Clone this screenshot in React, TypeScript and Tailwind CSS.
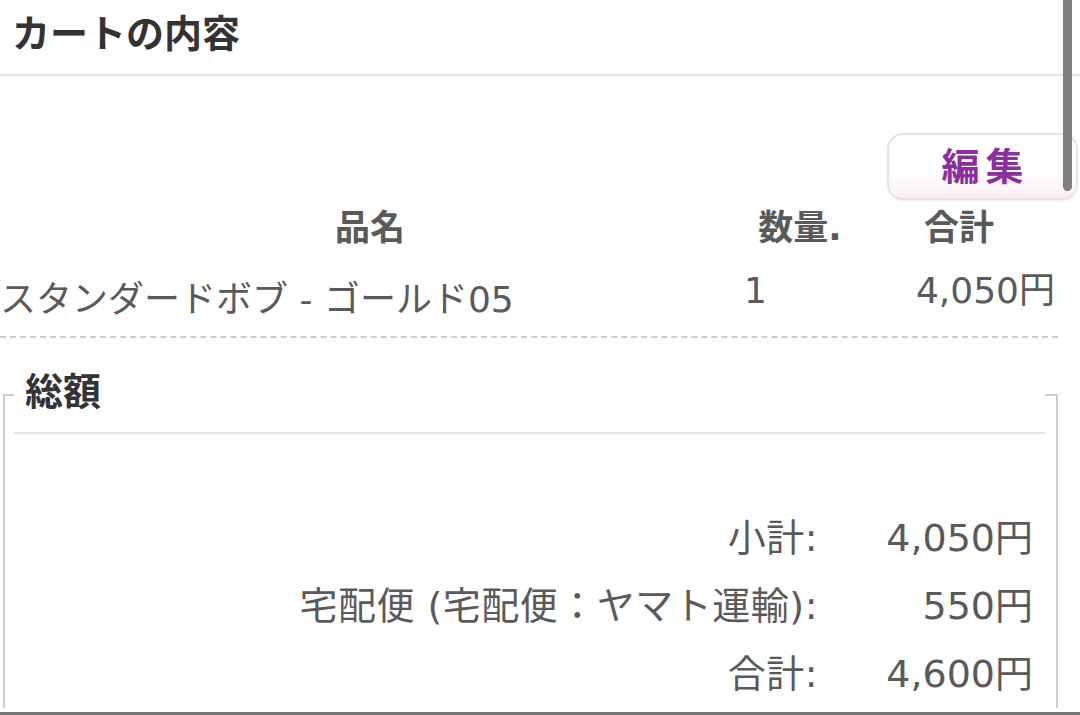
import React from "react";

const font = "font-['DejaVu_Sans','Noto_Sans_CJK_JP',sans-serif]";

const totals = [
  { label: "小計:", value: "4,050円" },
  { label: "宅配便 (宅配便：ヤマト運輸):", value: "550円" },
  { label: "合計:", value: "4,600円" },
];

export default function App() {
  return (
    <div className={`relative h-[715px] w-full overflow-hidden bg-white ${font}`}>
      {/* page title */}
      <div className="flex h-[76px] items-center border-b-2 border-[#e6e6e6] px-[12px] pb-[6px]">
        <h2 className="text-[38px] leading-[40px] font-bold text-[#333]">カートの内容</h2>
      </div>

      {/* edit button */}
      <div className="mt-[57px] flex justify-end pr-[2px]">
        <button className="flex h-[67px] w-[191px] items-center justify-center rounded-[16px] border-2 border-[#e4e4e4] bg-gradient-to-b from-white from-60% to-[#fbeef5] shadow-[0_1px_2px_rgba(0,0,0,0.08)]">
          <span className="pl-[6px] text-[38px] leading-[40px] font-bold tracking-[6px] text-[#8d2e9e]">編集</span>
        </button>
      </div>

      {/* cart table */}
      <div className="mr-[22px]">
        <div className="grid h-[56px] grid-cols-[740px_120px_1fr] items-center text-[35px] leading-[40px] font-bold text-[#5a5a5a]">
          <div className="text-center">品名</div>
          <div className="text-center">数量.</div>
          <div className="text-center">合計</div>
        </div>
        <div className="grid h-[82px] grid-cols-[740px_120px_1fr] border-b-2 border-dashed border-[#cdcdcd] text-[36px] leading-[40px] text-[#5a5a5a]">
          <div className="pt-[24px] whitespace-nowrap">スタンダードボブ - ゴールド05</div>
          <div className="pt-[15px] pl-[4px]">1</div>
          <div className="pt-[15px] pr-[3px] text-right">4,050円</div>
        </div>
      </div>

      {/* order totals */}
      <fieldset className="mt-[18px] mr-[22px] ml-[3px] border-2 border-b-0 border-[#cfcfcf] px-[9px]">
        <legend className="w-[1031px] border-b-2 border-[#e3e3e3] pt-[16px] pb-[20px] pl-[11px] text-[38px] leading-[40px] font-bold text-[#333]">
          総額
        </legend>
        <div className="pt-[70px] pr-[14px] text-[38px] leading-[40px] text-[#5a5a5a]">
          {totals.map((t) => (
            <div key={t.label} className="flex h-[68px] items-center justify-end">
              <span className="whitespace-nowrap tracking-[0.5px]">{t.label}</span>
              <span className="w-[215px] text-right">{t.value}</span>
            </div>
          ))}
        </div>
      </fieldset>

      {/* overlay scrollbar + footer edge */}
      <div className="absolute top-[-12px] right-[8px] h-[203px] w-[9px] rounded-full bg-[#7d7d7d]" />
      <div className="absolute right-0 bottom-0 left-0 h-[3px] bg-[#777]" />
    </div>
  );
}
